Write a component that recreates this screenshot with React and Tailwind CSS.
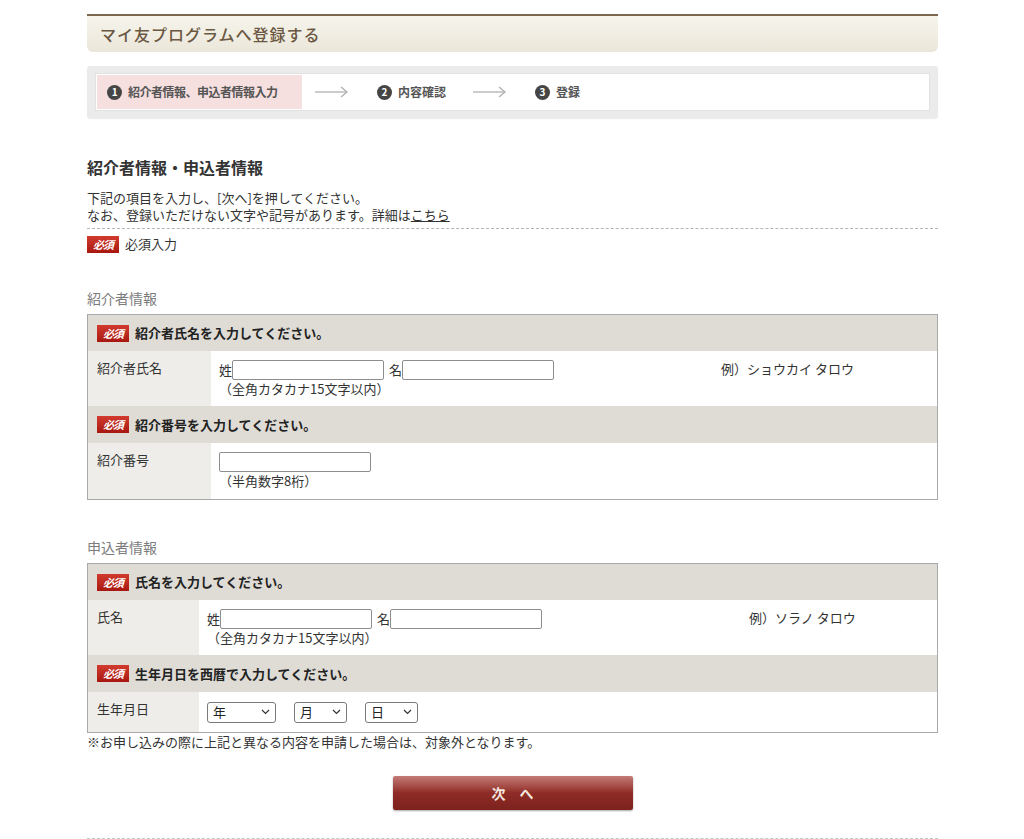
import { useState } from 'react';

const jp = "font-['Noto_Sans_CJK_JP','Noto_Sans',sans-serif]";

// 必須 badge
const Hissu = () => (
  <span className="inline-flex items-center justify-center w-[32px] h-[17px] bg-gradient-to-b from-[#d23a2e] to-[#a8170f] text-white text-[11px] font-bold leading-none tracking-[-1px] italic">
    必須
  </span>
);

const StepNum = ({ n }) => (
  <span className="inline-flex items-center justify-center w-[15px] h-[15px] rounded-full bg-[#454545] text-white text-[10px] font-bold leading-none">
    {n}
  </span>
);

const Arrow = () => (
  <svg width="34" height="12" viewBox="0 0 34 12" className="text-[#b0b0b0]">
    <line x1="0" y1="6" x2="32" y2="6" stroke="currentColor" strokeWidth="1.3" />
    <polyline points="26,1 32,6 26,11" fill="none" stroke="currentColor" strokeWidth="1.3" />
  </svg>
);

const Field = ({ w }) => (
  <input type="text" className={`${w} h-[20px] border border-[#8d8d8d] rounded-[2px] bg-white px-1 text-[13px] outline-none`} />
);

const Select = ({ label, w }) => (
  <div className={`relative ${w} h-[21px]`}>
    <select className="appearance-none w-full h-full border border-[#7a7a7a] rounded-[3px] bg-white pl-[5px] text-[13px] text-[#222] outline-none">
      <option>{label}</option>
    </select>
    <svg width="9" height="6" viewBox="0 0 9 6" className="absolute right-[6px] top-[8px] pointer-events-none">
      <polyline points="1,1 4.5,4.5 8,1" fill="none" stroke="#333" strokeWidth="1.2" />
    </svg>
  </div>
);

const HeadRow = ({ children, h = 'h-[36px]' }) => (
  <div className={`flex items-center gap-[6px] ${h} bg-[#dfdcd6] pl-[9px] text-[13px] font-bold text-[#222]`}>
    <Hissu />
    <span>{children}</span>
  </div>
);

export default function App() {
  const [sei, setSei] = useState('');

  return (
    <div className={`min-h-screen bg-white ${jp} text-[#333] leading-[18px]`}>
      <div className="w-[851px] ml-[87px] pt-[14px]">
        {/* title bar */}
        <div className="border-t-2 border-[#7b6650] h-[38px] rounded-b-md bg-gradient-to-b from-[#f6f5ec] to-[#ebe6da] flex items-center pl-[13px]">
          <h1 className="text-[16px] text-[#6b5843] font-medium tracking-[1px]">マイ友プログラムへ登録する</h1>
        </div>

        {/* steps */}
        <div className="mt-[14px] h-[52px] bg-[#ebebeb] rounded-[3px] shadow-[0_1px_1px_rgba(0,0,0,0.08)] px-[8px] py-[7px]">
          <div className="h-[38px] bg-white border border-[#e2e2e2] p-[1px] flex items-center">
            <div className="h-full w-[205px] bg-[#f6dfdf] flex items-center pl-[10px] gap-[6px] text-[12px] font-bold text-[#555] tracking-[-0.5px]">
              <StepNum n="1" />
              <span>紹介者情報、申込者情報入力</span>
            </div>
            <div className="ml-[13px]"><Arrow /></div>
            <div className="ml-[28px] flex items-center gap-[6px] text-[12px] font-bold text-[#555]">
              <StepNum n="2" />
              <span>内容確認</span>
            </div>
            <div className="ml-[27px]"><Arrow /></div>
            <div className="ml-[28px] flex items-center gap-[6px] text-[12px] font-bold text-[#555]">
              <StepNum n="3" />
              <span>登録</span>
            </div>
          </div>
        </div>

        {/* intro */}
        <h2 className="mt-[38px] text-[16px] font-bold text-[#333] leading-[22px]">紹介者情報・申込者情報</h2>
        <div className="mt-[11px] text-[13px] leading-[17px] text-[#333]">
          <p>下記の項目を入力し、[次へ]を押してください。</p>
          <p>
            なお、登録いただけない文字や記号があります。詳細は
            <a href="#" className="underline">こちら</a>
          </p>
        </div>
        <div className="mt-[5px] border-t border-dashed border-[#b5b5b5]" />
        <div className="mt-[6px] flex items-center gap-[6px] text-[13px]">
          <Hissu />
          <span>必須入力</span>
        </div>

        {/* 紹介者情報 */}
        <h3 className="mt-[35px] text-[14px] text-[#7c7c7c] leading-[20px]">紹介者情報</h3>
        <div className="mt-[6px] border border-[#a9a9a9]">
          <HeadRow>紹介者氏名を入力してください。</HeadRow>
          <div className="flex h-[55px]">
            <div className="w-[123px] bg-[#efede9] pl-[9px] pt-[8px] text-[13px]">紹介者氏名</div>
            <div className="pl-[8px] pt-[9px] flex">
              <div className="w-[502px] text-[13px]">
                <div className="flex items-center h-[20px]">
                  <span>姓</span>
                  <Field w="w-[152px]" />
                  <span className="ml-[5px]">名</span>
                  <Field w="w-[152px]" />
                </div>
                <p className="leading-[17px]">（全角カタカナ15文字以内）</p>
              </div>
              <div className="text-[13px]">例）ショウカイ タロウ</div>
            </div>
          </div>
          <HeadRow h="h-[37px]">紹介番号を入力してください。</HeadRow>
          <div className="flex h-[56px]">
            <div className="w-[123px] bg-[#efede9] pl-[9px] pt-[8px] text-[13px]">紹介番号</div>
            <div className="pl-[8px] pt-[9px] text-[13px]">
              <Field w="w-[152px]" />
              <p className="leading-[17px]">（半角数字8桁）</p>
            </div>
          </div>
        </div>

        {/* 申込者情報 */}
        <h3 className="mt-[37px] text-[14px] text-[#7c7c7c] leading-[20px]">申込者情報</h3>
        <div className="mt-[6px] border border-[#a9a9a9]">
          <HeadRow>氏名を入力してください。</HeadRow>
          <div className="flex h-[55px]">
            <div className="w-[111px] bg-[#efede9] pl-[9px] pt-[8px] text-[13px]">氏名</div>
            <div className="pl-[8px] pt-[9px] flex">
              <div className="w-[542px] text-[13px]">
                <div className="flex items-center h-[20px]">
                  <span>姓</span>
                  <input
                    type="text"
                    value={sei}
                    onChange={(e) => setSei(e.target.value)}
                    className="w-[152px] h-[20px] border border-[#8d8d8d] rounded-[2px] bg-white px-1 text-[13px] outline-none"
                  />
                  <span className="ml-[5px]">名</span>
                  <Field w="w-[152px]" />
                </div>
                <p className="leading-[17px]">（全角カタカナ15文字以内）</p>
              </div>
              <div className="text-[13px]">例）ソラノ タロウ</div>
            </div>
          </div>
          <HeadRow h="h-[37px]">生年月日を西暦で入力してください。</HeadRow>
          <div className="flex h-[40px]">
            <div className="w-[111px] bg-[#efede9] pl-[9px] pt-[8px] text-[13px]">生年月日</div>
            <div className="pl-[8px] pt-[9px] flex gap-[18px]">
              <Select label="年" w="w-[69px]" />
              <Select label="月" w="w-[53px]" />
              <Select label="日" w="w-[53px]" />
            </div>
          </div>
        </div>
        <p className="text-[13px] leading-[17px]">※お申し込みの際に上記と異なる内容を申請した場合は、対象外となります。</p>

        {/* submit */}
        <div className="mt-[26px] flex justify-center">
          <button className="w-[240px] h-[34px] rounded-[2px] bg-gradient-to-b from-[#c47b78] via-[#8f2b26] to-[#7c221d] shadow-[0_1px_2px_rgba(0,0,0,0.35)] text-[14px] font-bold text-[#f3e6df] tracking-[14px] pl-[14px]">
            次へ
          </button>
        </div>
        <div className="mt-[28px] border-t border-dashed border-[#c5c5c5]" />
      </div>
    </div>
  );
}
